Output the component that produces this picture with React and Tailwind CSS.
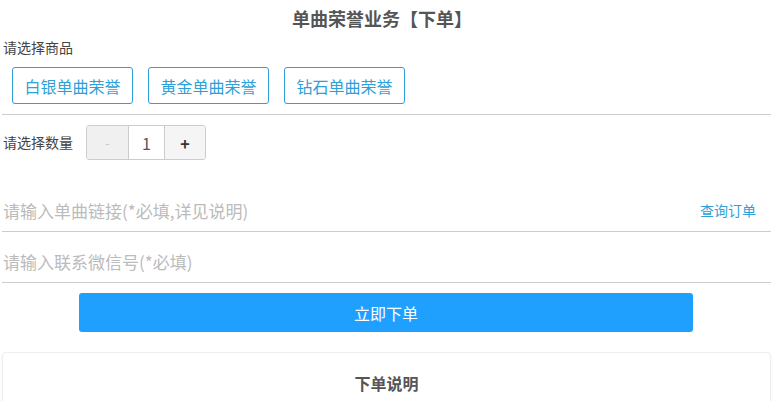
import { useState } from 'react';

const font = { fontFamily: '"Noto Sans CJK SC", "Liberation Sans", sans-serif' };

const goods = ['白银单曲荣誉', '黄金单曲荣誉', '钻石单曲荣誉'];

export default function App() {
  const [qty, setQty] = useState(1);

  return (
    <div className="w-[773px] h-[401px] overflow-hidden bg-white text-[#444]" style={font}>
      <h1 className="pt-[6px] h-[30px] text-center text-[18px] leading-[24px] font-bold text-[#555] pr-[9px]">
        单曲荣誉业务【下单】
      </h1>

      <p className="px-[3px] mt-[8px] text-[14px] leading-[18px]">请选择商品</p>
      <div className="flex gap-[15px] pl-[12px] mt-[11px]">
        {goods.map(g => (
          <button
            key={g}
            className="w-[121px] h-[37px] border border-[#2d9fd9] rounded-[3px] text-[16px] text-[#2d9fd9] leading-none"
          >
            {g}
          </button>
        ))}
      </div>
      <div className="mx-[2px] mt-[10px] border-t border-[#ccc]" />

      <div className="flex items-center mt-[10px] px-[3px]">
        <span className="w-[83px] text-[14px] leading-[18px] -mt-[2px]">请选择数量</span>
        <div className="flex h-[35px] border border-[#ccc] rounded-[3px] overflow-hidden">
          <button
            onClick={() => setQty(q => Math.max(1, q - 1))}
            className="w-[41px] bg-[#f0f0f0] text-[#ccc] text-[14px]"
          >
            -
          </button>
          <div className="w-[37px] flex items-center justify-center border-x border-[#ccc] text-[16px] text-[#555]">
            {qty}
          </div>
          <button
            onClick={() => setQty(q => q + 1)}
            className="w-[40px] bg-[#f5f5f5] text-[#333] text-[16px] font-bold"
          >
            +
          </button>
        </div>
      </div>

      <div className="flex items-end mx-[2px] mt-[22px] h-[50px] pb-[10px] border-b border-[#ccc]">
        <input
          className="flex-1 px-[1px] text-[17px] leading-[20px] outline-none placeholder:text-[#bbb]"
          placeholder="请输入单曲链接(*必填,详见说明)"
        />
        <a className="text-[14px] leading-[20px] text-[#2d9fd9] mr-[15px] mb-[1px] cursor-pointer">查询订单</a>
      </div>

      <div className="flex items-end mx-[2px] h-[51px] pb-[10px] border-b border-[#ccc]">
        <input
          className="flex-1 px-[1px] text-[17px] leading-[20px] outline-none placeholder:text-[#bbb]"
          placeholder="请输入联系微信号(*必填)"
        />
      </div>

      <div className="pl-[79px] mt-[10px]">
        <button className="w-[614px] h-[39px] bg-[#1fa0ff] rounded-[3px] text-white text-[16px]">
          立即下单
        </button>
      </div>

      <div className="mx-[2px] mt-[20px] h-[80px] border border-[#eee] rounded-[4px] shadow-[0_1px_3px_rgba(0,0,0,0.06)]">
        <h2 className="pt-[19px] text-center text-[16px] leading-[22px] font-bold text-[#555]">下单说明</h2>
      </div>
    </div>
  );
}
